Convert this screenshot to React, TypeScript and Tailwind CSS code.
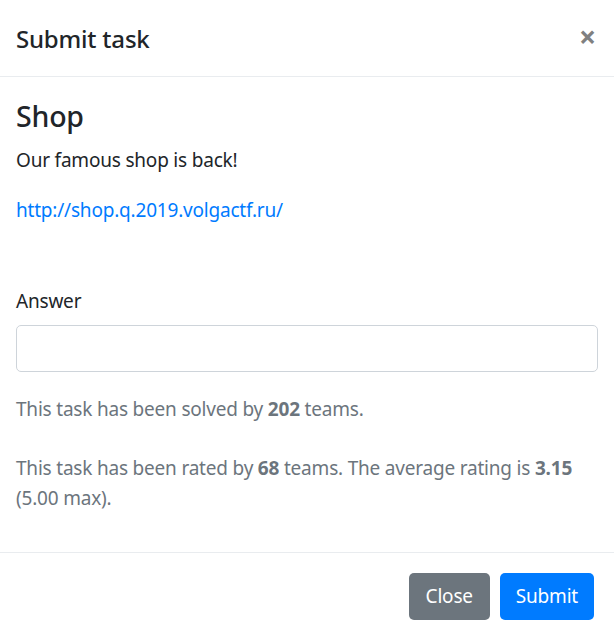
export default function App() {
  return (
    <div
      className="w-[614px] h-[636px] bg-white text-[#212529] overflow-hidden tracking-[-0.2px]"
      style={{ fontFamily: '"Noto Sans", "Open Sans", Arial, sans-serif' }}
    >
      <header className="h-[77px] border-b border-[#e9ecef] flex items-center justify-between pl-[16px] pr-[18px]">
        <h5 className="text-[24px] leading-[37px] font-medium">Submit task</h5>
        <button className="text-[30px] leading-none font-bold text-[#808080] -mt-[2px]">×</button>
      </header>

      <div className="px-[16px] pt-[21px] pb-[20px] text-[19px] leading-[30px]">
        <h4 className="text-[28.5px] leading-[36px] font-medium mb-[11px]">Shop</h4>
        <p className="mb-[20px]">Our famous shop is back!</p>
        <p className="mb-[61px]">
          <a className="text-[#007bff]">http://shop.q.2019.volgactf.ru/</a>
        </p>

        <label className="block mb-[9px]">Answer</label>
        <input className="block w-full h-[47px] border border-[#ced4da] rounded-[5px] px-[15px] text-[20px] outline-none" />

        <p className="text-[#6c757d] mt-[22px]">
          This task has been solved by <b>202</b> teams.
        </p>
        <p className="text-[#6c757d] mt-[29px]">
          This task has been rated by <b>68</b> teams. The average rating is <b>3.15</b> (5.00 max).
        </p>
      </div>

      <footer className="mt-[19px] border-t border-[#e9ecef] flex justify-end gap-[10px] px-[20px] pt-[20px]">
        <button className="h-[47px] px-[17px] rounded-[5px] bg-[#6c757d] text-white text-[19px]">Close</button>
        <button className="h-[47px] px-[16px] rounded-[5px] bg-[#007bff] text-white text-[19px]">Submit</button>
      </footer>
    </div>
  );
}
